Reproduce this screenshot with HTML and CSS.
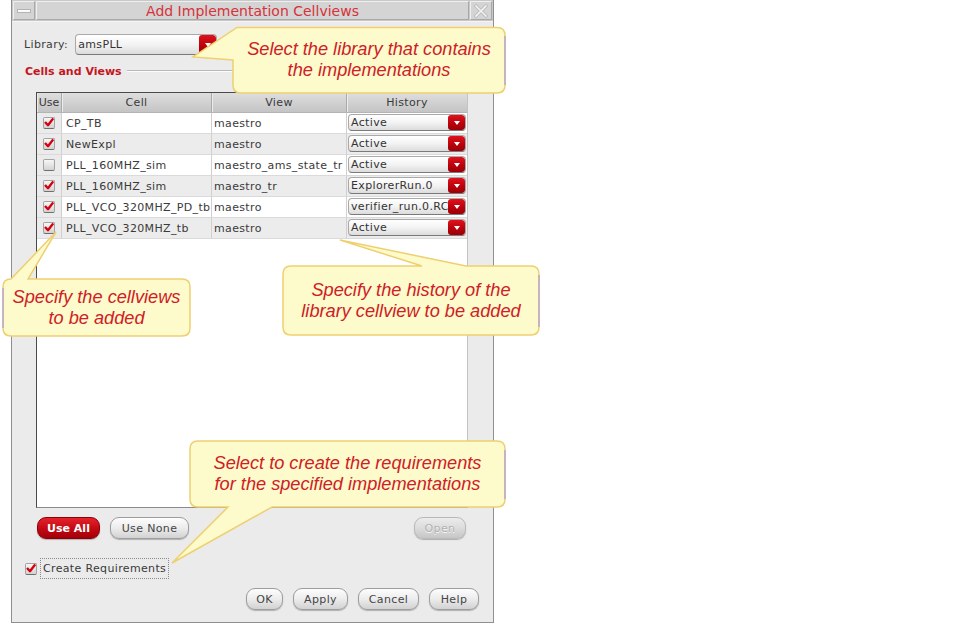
FILE: index.html
```html
<!DOCTYPE html>
<html>
<head>
<meta charset="utf-8">
<title>Add Implementation Cellviews</title>
<link rel="stylesheet" href="styles.css">
</head>
<body>
<div class="page">
  <div class="window">
    <div class="titlebar">
      <div class="tb-btn">
        <svg width="14" height="6" viewBox="0 0 14 6"><rect x="0.5" y="1.5" width="13" height="3" fill="#fbfbfb" stroke="#b3b3b3"/></svg>
      </div>
      <div class="tb-title">Add Implementation Cellviews</div>
      <div class="tb-btn">
        <svg width="14" height="14" viewBox="0 0 14 14"><path d="M2 2 L12 12 M12 2 L2 12" stroke="#bdbdbd" stroke-width="3.4" stroke-linecap="square"/><path d="M2 2 L12 12 M12 2 L2 12" stroke="#f2f2f2" stroke-width="1.6" stroke-linecap="square"/></svg>
      </div>
    </div>
    <div class="content">
      <div class="lib-row">
        <span class="lib-label">Library:</span>
        <div class="combo lib-combo"><span class="combo-text">amsPLL</span><span class="combo-arrow"></span></div>
      </div>
      <div class="group-title"><span class="group-name">Cells and Views</span><span class="group-line"></span></div>
      <div class="table-frame">
        <div class="thead">
          <div>Use</div><div>Cell</div><div>View</div><div>History</div>
        </div>
        <div class="trow">
          <div class="use"><span class="chk on"></span></div><div class="txt">CP_TB</div><div class="txt view">maestro</div>
          <div class="hist"><div class="combo"><span class="combo-text">Active</span><span class="combo-arrow"></span></div></div>
        </div>
        <div class="trow alt">
          <div class="use"><span class="chk on"></span></div><div class="txt">NewExpl</div><div class="txt view">maestro</div>
          <div class="hist"><div class="combo"><span class="combo-text">Active</span><span class="combo-arrow"></span></div></div>
        </div>
        <div class="trow">
          <div class="use"><span class="chk"></span></div><div class="txt">PLL_160MHZ_sim</div><div class="txt view">maestro_ams_state_tr</div>
          <div class="hist"><div class="combo"><span class="combo-text">Active</span><span class="combo-arrow"></span></div></div>
        </div>
        <div class="trow alt">
          <div class="use"><span class="chk on"></span></div><div class="txt">PLL_160MHZ_sim</div><div class="txt view">maestro_tr</div>
          <div class="hist"><div class="combo"><span class="combo-text">ExplorerRun.0</span><span class="combo-arrow"></span></div></div>
        </div>
        <div class="trow">
          <div class="use"><span class="chk on"></span></div><div class="txt">PLL_VCO_320MHZ_PD_tb</div><div class="txt view">maestro</div>
          <div class="hist"><div class="combo"><span class="combo-text">verifier_run.0.RC</span><span class="combo-arrow"></span></div></div>
        </div>
        <div class="trow alt">
          <div class="use"><span class="chk on"></span></div><div class="txt">PLL_VCO_320MHZ_tb</div><div class="txt view">maestro</div>
          <div class="hist"><div class="combo"><span class="combo-text">Active</span><span class="combo-arrow"></span></div></div>
        </div>
      </div>
      <div class="btn-row">
        <button class="btn btn-red w-useall">Use All</button>
        <button class="btn w-usenone">Use None</button>
        <span class="spacer"></span>
        <button class="btn btn-off w-open">Open</button>
      </div>
      <div class="req-row">
        <span class="chk on"></span>
        <span class="req-label">Create Requirements</span>
      </div>
      <div class="bottom-row">
        <button class="btn w-ok">OK</button>
        <button class="btn w-apply">Apply</button>
        <button class="btn w-cancel">Cancel</button>
        <button class="btn w-help">Help</button>
      </div>
    </div>
  </div>

  <svg class="callouts" width="958" height="635" viewBox="0 0 958 635">
    <path class="co" d="M237 27.5 H497 Q505 27.5 505 35.5 V85 Q505 93 497 93 H241 Q233 93 233 85 V60 L193 57 Z"/>
    <path class="co" d="M3 287 Q3 279 11 279 L56 232 L28 279 H182 Q190 279 190 287 V328 Q190 336 182 336 H11 Q3 336 3 328 Z"/>
    <path class="co" d="M291 266 H422 L340 240 L466 266 H531 Q539 266 539 274 V327 Q539 335 531 335 H291 Q283 335 283 327 V274 Q283 266 291 266 Z"/>
    <path class="co" d="M198 441 H497 Q505 441 505 449 V499 Q505 507 497 507 H272 L172 563 L228 507 H198 Q190 507 190 499 V449 Q190 441 198 441 Z"/>
    <path class="edge" d="M505 36 V85"/>
    <path class="edge" d="M3 288 V328"/>
    <path class="edge" d="M539 275 V327"/>
    <path class="edge" d="M505 450 V499"/>
  </svg>
  <div class="co-text co1">Select the library that contains<br>the implementations</div>
  <div class="co-text co2">Specify the cellviews<br>to be added</div>
  <div class="co-text co3">Specify the history of the<br>library cellview to be added</div>
  <div class="co-text co4">Select to create the requirements<br>for the specified implementations</div>
</div>
</body>
</html>
```
FILE: styles.css
```css
* { box-sizing: border-box; }

body {
  margin: 0;
  background: #ffffff;
  font-family: "DejaVu Sans", "Noto Sans", sans-serif;
  font-size: 11px;
  color: #3a3a3a;
}

.page {
  position: relative;
  width: 958px;
  height: 635px;
  overflow: hidden;
}

.window {
  margin-left: 11px;
  width: 483px;
  height: 623px;
  background: #ebebeb;
  border: 1px solid #8f8f8f;
  border-top: 0;
  display: flex;
  flex-direction: column;
}

/* title bar */
.titlebar {
  height: 22px;
  display: flex;
  gap: 1px;
  padding: 1px;
  background: #c8c8c8;
  border-bottom: 1px solid #f4f4f4;
}
.tb-btn {
  width: 22px;
  display: flex;
  align-items: center;
  justify-content: center;
  background: #d4d4d4;
  border: 1px solid;
  border-color: #efefef #a8a8a8 #a8a8a8 #efefef;
}
.tb-title {
  flex: 1;
  text-align: center;
  color: #d6323a;
  font-size: 14px;
  line-height: 18px;
  background: #d4d4d4;
  border: 1px solid;
  border-color: #efefef #a8a8a8 #a8a8a8 #efefef;
}

.content {
  flex: 1;
  display: flex;
  flex-direction: column;
  padding: 12px 14px 0 12px;
  letter-spacing: 0.35px;
}

/* library row */
.lib-row {
  display: flex;
  align-items: center;
  height: 21px;
  gap: 7px;
}
.lib-label { color: #3c3c3c; }
.lib-combo { width: 142px; height: 21px; }

.combo {
  display: flex;
  align-items: stretch;
  border: 1px solid #a9a9a9;
  border-bottom-color: #7a7a7a;
  border-radius: 4px;
  background: linear-gradient(#ffffff, #f3f3f3 50%, #dcdcdc);
  overflow: hidden;
}
.combo-text {
  flex: 1;
  padding-left: 2px;
  display: flex;
  align-items: center;
  color: #333;
  white-space: nowrap;
  overflow: hidden;
}
.combo-arrow {
  width: 17px;
  flex: none;
  background: linear-gradient(#e0121d, #b8000a 60%, #9a0008);
  border-radius: 3px;
  display: flex;
  align-items: center;
  justify-content: center;
}
.combo-arrow::after {
  content: "";
  width: 0;
  height: 0;
  border-left: 3.5px solid transparent;
  border-right: 3.5px solid transparent;
  border-top: 4px solid #ffffff;
}

/* group title */
.group-title {
  display: flex;
  align-items: center;
  margin-top: 9px;
  height: 14px;
  padding-left: 1px;
}
.group-name {
  color: #c5161f;
  font-weight: bold;
  letter-spacing: 0;
}
.group-line {
  flex: 1;
  margin-left: 5px;
  height: 2px;
  border-top: 1px solid #b9b9b9;
  border-bottom: 1px solid #fbfbfb;
}

/* table */
.table-frame {
  margin-top: 14px;
  margin-left: 12px;
  width: 432px;
  height: 416px;
  border: 1px solid;
  border-color: #4a4a4a #c4c4c4 #8a8a8a #4a4a4a;
  background: #ffffff;
}
.thead, .trow {
  display: grid;
  grid-template-columns: 25px 150px 135px 120px;
}
.thead {
  height: 20px;
  background: linear-gradient(#dedede, #c4c4c4);
  border-bottom: 1px solid #b4b4b4;
}
.thead > div {
  text-align: center;
  line-height: 19px;
  color: #3a3a3a;
  border-right: 1px solid #a9a9a9;
  box-shadow: inset 1px 0 0 #ececec;
}
.thead > div:first-child { letter-spacing: 0; }
.thead > div:last-child { border-right: 0; }

.trow {
  height: 21px;
  background: #ffffff;
}
.trow.alt { background: #ececec; }
.trow > div {
  border-right: 1px solid #d0d0d0;
  border-bottom: 1px solid #dadada;
  display: flex;
  align-items: center;
  white-space: nowrap;
  overflow: hidden;
}
.trow > div:last-child { border-right: 0; }
.trow .txt { padding-left: 4px; color: #3a3a3a; }
.trow .view { padding-left: 2px; }
.trow .use {
  justify-content: center;
  background: #ebebeb;
}
.trow .hist {
  padding: 1px 1px 2px 1px;
  align-items: stretch;
}
.trow .hist .combo { flex: 1; }

/* checkbox */
.chk {
  display: inline-block;
  width: 12px;
  height: 12px;
  border: 1px solid #a3a3a3;
  border-bottom-color: #6f6f6f;
  border-radius: 2px;
  background: linear-gradient(#f7f7f7, #d2d2d2);
  position: relative;
  flex: none;
}
.chk.on::after {
  content: "";
  position: absolute;
  left: 0px;
  top: -1px;
  width: 10px;
  height: 10px;
  background: no-repeat center / contain url("data:image/svg+xml;utf8,<svg xmlns='http://www.w3.org/2000/svg' viewBox='0 0 10 10'><path d='M1 5 L4 8.2 L9.2 1.4' fill='none' stroke='%23d4000f' stroke-width='2.4' stroke-linejoin='round'/></svg>");
}

/* buttons */
.btn {
  height: 22px;
  padding: 0;
  border: 1px solid #9d9d9d;
  border-radius: 9px;
  background: linear-gradient(#fdfdfd, #ececec 50%, #d2d2d2);
  box-shadow: 0 1px 1px rgba(0, 0, 0, 0.25);
  font-family: "DejaVu Sans", "Noto Sans", sans-serif;
  font-size: 11px;
  letter-spacing: 0.35px;
  color: #454545;
  text-align: center;
}
.btn-red {
  background: linear-gradient(#e4232c, #c30812 55%, #a3000a);
  border-color: #8c0008;
  color: #ffffff;
  font-weight: bold;
  letter-spacing: 0;
}
.btn-off {
  background: linear-gradient(#ececec, #dcdcdc 50%, #c6c6c6);
  border-color: #b9b9b9;
  color: #b1b1b1;
  text-shadow: 0 1px 0 #f6f6f6;
}
.w-useall { width: 63px; }
.w-usenone { width: 79px; }
.w-open { width: 52px; }
.w-ok { width: 37px; }
.w-apply { width: 55px; }
.w-cancel { width: 61px; }
.w-help { width: 50px; }

.btn-row {
  display: flex;
  margin-top: 9px;
  padding: 0 13px 0 13px;
  gap: 10px;
}
.spacer { flex: 1; }

.req-row {
  margin-top: 19px;
  display: flex;
  align-items: center;
  height: 21px;
  padding-left: 1px;
  gap: 3px;
}
.req-label {
  height: 21px;
  line-height: 19px;
  padding: 0 2px;
  border: 1px dotted #8a8a8a;
  color: #3a3a3a;
}

.bottom-row {
  margin-top: 9px;
  display: flex;
  justify-content: flex-end;
  gap: 10px;
}

/* callouts */
.callouts {
  position: absolute;
  left: 0;
  top: 0;
  pointer-events: none;
}
.co {
  fill: #fdfbcb;
  stroke: #eed070;
  stroke-width: 1.5;
}
.edge {
  fill: none;
  stroke: #a99ae0;
  stroke-width: 1.2;
}
.co-text {
  position: absolute;
  display: flex;
  align-items: center;
  justify-content: center;
  text-align: center;
  font-family: "Liberation Sans", Arial, sans-serif;
  font-style: italic;
  font-size: 18.2px;
  line-height: 21px;
  color: #cf2027;
  white-space: nowrap;
}
.co1 { left: 233px; top: 27px; width: 272px; height: 66px; }
.co2 { left: 3px; top: 279px; width: 187px; height: 57px; }
.co3 { left: 283px; top: 266px; width: 256px; height: 69px; }
.co4 { left: 190px; top: 441px; width: 315px; height: 66px; }
```
